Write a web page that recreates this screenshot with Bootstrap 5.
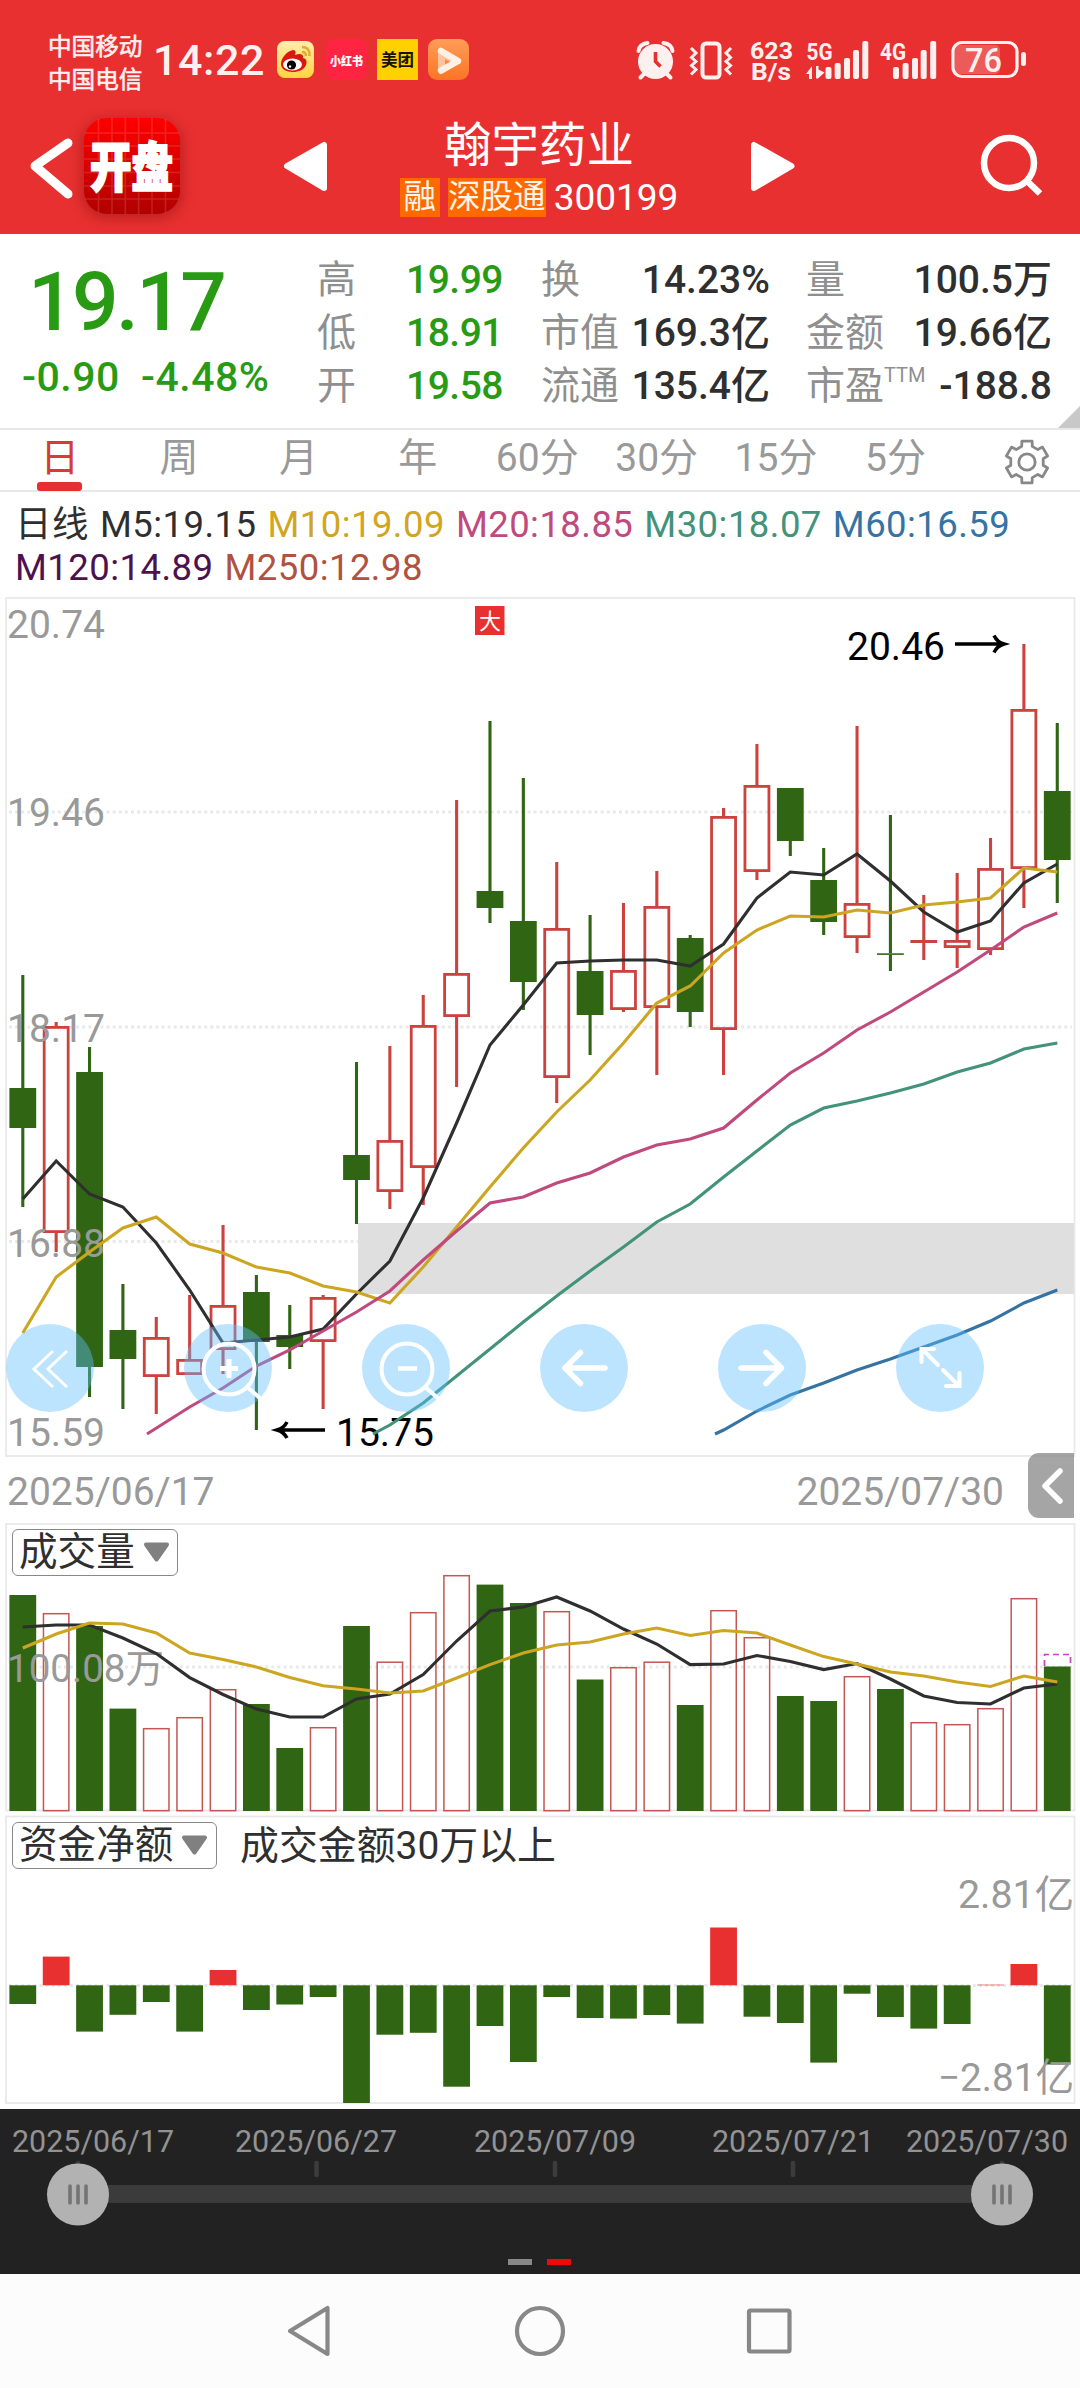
<!DOCTYPE html>
<html lang="zh-CN">
<head>
<meta charset="utf-8">
<meta name="viewport" content="width=device-width, initial-scale=1">
<title>翰宇药业 300199</title>
<link href="https://cdn.jsdelivr.net/npm/bootstrap@5.3.0/dist/css/bootstrap.min.css" rel="stylesheet">
<style>
  body{width:1080px;height:2388px;overflow:hidden;background:#fff;color:#2f2f2f;font-family:Roboto,"Noto Sans CJK SC",sans-serif;font-size:39px;line-height:1}
  svg{display:block;flex:none}
  svg text{font-family:Roboto,"Noto Sans CJK SC",sans-serif}
  .bg-brand{background:#e83030}
  .status{height:108px;color:#fff0f0}
  .carrier{width:95px;margin-left:48px;padding-top:31px;font-size:23.6px;line-height:33px;-webkit-text-stroke:.6px #fff0f0}
  .clock{width:117px;margin-left:10px;padding-top:39px;font-size:43px;font-weight:500;letter-spacing:.6px}
  .head{height:126px}
  .title{width:300px;height:106px;margin-left:49px}
  .title h1{font-size:47.5px;line-height:56px;margin:0;padding-top:10px;font-weight:400}
  .tag{background:#ff6a00;height:39px;line-height:38px;font-size:32.5px;color:#fff5e8}
  .code{font-size:37px;line-height:39px}
  .quote{height:196px;border-bottom:2px solid #e8e8e8}
  .up-down{color:#289a14}
  .price{font-size:82px;font-weight:500;letter-spacing:-2.6px;margin:32px 0 0 28px;height:91px;line-height:72px}
  .chg{font-size:41px;font-weight:500;margin-left:22px;letter-spacing:.5px}
  .stats{padding-top:21px}
  .stats>div{height:53px;line-height:50px}
  .stats span:first-child{color:#8f8f8f}
  .stats span:last-child{font-weight:500}
  .stats .up-down:last-child{letter-spacing:-.5px}
  .stats sup{font-size:20px;top:-17px;font-weight:400}
  .corner{right:0;bottom:0;border-left:22px solid transparent;border-bottom:22px solid #c8c8c8}
  .tabs{height:62px;border-bottom:2px solid #e8e8e8;color:#999}
  .tabs .tab{width:119.4px;text-align:center;line-height:56px;height:60px}
  .tabs .active{color:#d83a34;position:relative}
  .tabs .active::after{content:"";position:absolute;left:37px;top:52px;width:45px;height:9px;border-radius:3px;background:#e63030}
  .settings{margin-right:23px}
  .legend{height:104px;padding:11px 0 0 15px;font-size:36.5px;line-height:43px;letter-spacing:.45px}
  .legend span{margin-right:11px;white-space:nowrap}
  .charts{height:1512px;position:relative;margin-top:1px}
  .tool{position:absolute;top:727px;width:88px;height:88px;border-radius:50%;background:rgba(95,190,255,.42);border:0;padding:0}
  .dates{position:absolute;left:7px;right:76px;top:876px;color:#999}
  .drawer{position:absolute;left:1028px;top:856px;width:46px;height:65px;border-radius:11px 0 0 11px;background:rgba(133,133,133,.74)}
  .pick{position:absolute;left:12px;height:47px;border:1.4px solid #888;border-radius:6px;background:#fff;color:#2f2f2f;padding:0 6px;line-height:1;gap:8px;white-space:nowrap;font-size:38.6px}
  .scrub{height:165px;background:#222}
  .navkeys{height:114px;background:#fcfcfc}
</style>
</head>
<body>
<header class="bg-brand text-white">
  <div class="status d-flex align-items-start">
    <div class="carrier">中国移动<br>中国电信</div>
    <div class="clock text-nowrap">14:22</div>
    <svg width="210" height="108" viewBox="270 0 210 108">
      <defs>
        <linearGradient id="wb" x1="0" y1="0" x2="0" y2="1"><stop offset="0" stop-color="#ffeeb0"/><stop offset="1" stop-color="#ffd53e"/></linearGradient>
        <linearGradient id="og" x1="0" y1="0" x2="0" y2="1"><stop offset="0" stop-color="#ff9d58"/><stop offset="1" stop-color="#fb7425"/></linearGradient>
      </defs>
      <rect x="277" y="41" width="37" height="37" rx="8" fill="url(#wb)"/>
      <path d="M281 64c0-6 6-13 12-14 3 0 3 3 2 5 5-2 9-1 8 3 4 1 4 4 3 7-2 5-8 7-13 7-7 0-12-3-12-8z" fill="#da1710"/>
      <ellipse cx="292.500" cy="64.500" rx="9.500" ry="6" fill="#fff"/>
      <circle cx="291.500" cy="65" r="4.600" fill="#000"/><circle cx="290" cy="66.500" r="1.200" fill="#fff"/>
      <path d="M302 47c6 0 8 4 7.500 9M302 52c3 0 4 2 4 4" fill="none" stroke="#e5a92c" stroke-width="2.400"/>
      <rect x="326" y="39" width="41" height="41" rx="9" fill="#ff2442"/>
      <text x="330" y="65.500" font-size="12.500" font-weight="900" fill="#fff" textLength="33" lengthAdjust="spacingAndGlyphs">小红书</text>
      <rect x="377" y="39" width="41" height="41" fill="#ffd100"/>
      <text x="381" y="66" font-size="17" font-weight="700" fill="#1a1200" textLength="33" lengthAdjust="spacingAndGlyphs">美团</text>
      <rect x="428" y="39" width="41" height="41" rx="9" fill="url(#og)"/>
      <path d="M441 51l17 10-17 10z" fill="#ffc49d" stroke="#ffc49d" stroke-width="6" stroke-linejoin="round"/>
      <path d="M445 59v7l6-3.500z" fill="#fb8a42"/>
      <path d="M441 51l17 10-17 9.500" fill="none" stroke="#fff0e6" stroke-width="6.500" stroke-linejoin="round" stroke-linecap="round"/>
    </svg>
    <svg class="ms-auto" width="450" height="108" viewBox="630 0 450 108" fill="#fff0f0">
      <circle cx="655.500" cy="61.500" r="17.500"/>
      <path d="M638.500 51q1-7 9-8M672.500 51q-1-7-9-8M645 73l-4.500 4.500M666 73l4.500 4.500" fill="none" stroke="#fff0f0" stroke-width="4" stroke-linecap="round"/>
      <path d="M655.500 52v9.500l5 5" fill="none" stroke="#e83030" stroke-width="3.600"/>
      <rect x="702.500" y="43.500" width="17" height="34" rx="3.500" fill="none" stroke="#fff0f0" stroke-width="4"/>
      <path d="M691 48l5 5-4.500 4.500 4.500 4-4.500 4 4.500 4-5 5M731 48l-5 5 4.500 4.500-4.500 4 4.500 4-4.500 4 5 5" fill="none" stroke="#fff0f0" stroke-width="3"/>
      <g font-weight="700" font-size="24.500">
        <text x="750" y="59" textLength="43" lengthAdjust="spacingAndGlyphs">623</text>
        <text x="751" y="79.500" font-size="23" textLength="40" lengthAdjust="spacingAndGlyphs">B/s</text>
        <text x="806.500" y="59.500" textLength="26" lengthAdjust="spacingAndGlyphs">5G</text>
        <text x="880" y="59.500" textLength="26" lengthAdjust="spacingAndGlyphs">4G</text>
      </g>
      <path d="M806 74l6-8v13h-3v-5zM816 66h2.500v3.500l6 3-6.500 6h-2z"/>
      <g>
        <rect x="825.500" y="67" width="6" height="12" rx="2"/><rect x="834.700" y="63" width="6" height="16" rx="2"/><rect x="844" y="58" width="6" height="21" rx="2"/><rect x="853" y="50" width="6" height="29" rx="2"/><rect x="862.300" y="41" width="6" height="38" rx="2"/>
        <rect x="893" y="67" width="6" height="12" rx="2"/><rect x="902.600" y="63" width="6" height="16" rx="2"/><rect x="912" y="58" width="6" height="21" rx="2"/><rect x="920.700" y="50" width="6" height="29" rx="2"/><rect x="930.200" y="41" width="6" height="38" rx="2"/>
      </g>
      <rect x="955" y="45" width="45" height="29" rx="5" opacity=".22"/>
      <rect x="953" y="42.500" width="64" height="34" rx="9" fill="none" stroke="#fff0f0" stroke-width="3.200"/>
      <rect x="1021" y="52" width="5" height="14" rx="2.500"/>
      <text x="965" y="71.500" font-size="33.500" font-weight="500" textLength="37" lengthAdjust="spacingAndGlyphs">76</text>
    </svg>
  </div>
  <div class="head d-flex align-items-start">
    <svg width="340" height="126" viewBox="0 108 340 126">
      <defs>
        <linearGradient id="kp" x1="0" y1="0" x2="0" y2="1"><stop offset="0" stop-color="#ff0000"/><stop offset="1" stop-color="#b10000"/></linearGradient>
        <filter id="sh" x="-30%" y="-30%" width="160%" height="160%"><feGaussianBlur stdDeviation="7"/></filter>
      </defs>
      <path d="M68 143L35 166l33 28" fill="none" stroke="#fff" stroke-width="9" stroke-linecap="round" stroke-linejoin="round"/>
      <rect x="82" y="120" width="100" height="98" rx="24" fill="#600" opacity=".35" filter="url(#sh)"/>
      <rect x="84" y="118" width="96" height="96" rx="23" fill="url(#kp)"/>
      <path d="M98.500 119v94M112 118v96M125.300 118v96M138.600 118v96M152 118v96M165.500 119v94M85 133h94M84 146h96M84 159h96M84 172.500h96M84 186h96M85 199h94" stroke="#fff" stroke-opacity=".13" stroke-width="1.600"/>
      <text transform="translate(90 187) scale(1 1.280)" font-size="42" font-weight="900" fill="#fff" stroke="#fff" stroke-width="1.600" textLength="83" lengthAdjust="spacingAndGlyphs">开盘</text>
      <path d="M287 166L324 145v43z" fill="#fff" stroke="#fff" stroke-width="6" stroke-linejoin="round"/>
    </svg>
    <div class="title text-center">
      <h1>翰宇药业</h1>
      <div class="d-flex justify-content-center gap-2 mt-1">
        <span class="tag px-1">融</span><span class="tag px-0">深股通</span><span class="code">300199</span>
      </div>
    </div>
    <svg class="ms-auto" width="340" height="126" viewBox="740 108 340 126">
      <path d="M791.500 166L754 145v43z" fill="#fff" stroke="#fff" stroke-width="6" stroke-linejoin="round"/>
      <g fill="none" stroke="#fff" stroke-width="6.500"><circle cx="1009" cy="163" r="25"/><path d="M1027 181l13 12.500"/></g>
    </svg>
  </div>
</header>

<section class="quote position-relative d-flex">
  <div class="up-down" style="width:317px">
    <div class="price">19.17</div>
    <div class="chg d-flex text-nowrap"><span style="width:119px">-0.90</span><span>-4.48%</span></div>
  </div>
  <div class="stats" style="width:186px">
    <div class="d-flex justify-content-between"><span>高</span><span class="up-down">19.99</span></div>
    <div class="d-flex justify-content-between"><span>低</span><span class="up-down">18.91</span></div>
    <div class="d-flex justify-content-between"><span>开</span><span class="up-down">19.58</span></div>
  </div>
  <div class="stats" style="width:229px;margin-left:38px">
    <div class="d-flex justify-content-between"><span>换</span><span>14.23%</span></div>
    <div class="d-flex justify-content-between"><span>市值</span><span>169.3亿</span></div>
    <div class="d-flex justify-content-between"><span>流通</span><span>135.4亿</span></div>
  </div>
  <div class="stats" style="width:246px;margin-left:36px">
    <div class="d-flex justify-content-between"><span>量</span><span>100.5万</span></div>
    <div class="d-flex justify-content-between"><span>金额</span><span>19.66亿</span></div>
    <div class="d-flex justify-content-between"><span>市盈<sup>TTM</sup></span><span>-188.8</span></div>
  </div>
  <i class="corner position-absolute"></i>
</section>

<nav class="tabs d-flex">
  <span class="tab active">日</span><span class="tab">周</span><span class="tab">月</span><span class="tab">年</span><span class="tab">60分</span><span class="tab">30分</span><span class="tab">15分</span><span class="tab">5分</span>
  <svg class="settings ms-auto mt-1" width="60" height="56" viewBox="-30 -28 60 56" fill="none" stroke="#888" stroke-width="2.800" stroke-linejoin="round"><path id="gear"/><circle r="8.200"/></svg>
</nav>

<section class="legend">
  <div class="d-flex"><span>日线</span><span>M5:19.15</span><span style="color:#d2a520">M10:19.09</span><span style="color:#c04a7e">M20:18.85</span><span style="color:#43927a">M30:18.07</span><span style="color:#3573a4">M60:16.59</span></div>
  <div class="d-flex"><span style="color:#4b124f">M120:14.89</span><span style="color:#b0523f">M250:12.98</span></div>
</section>

<main class="charts">
  <svg id="plot" width="1080" height="1512" viewBox="0 597 1080 1512"></svg>
  <div class="dates d-flex justify-content-between"><span>2025/06/17</span><span>2025/07/30</span></div>
  <button class="tool" style="left:6px"><svg width="88" height="88" viewBox="0 0 88 88" fill="none" stroke="#fff" stroke-width="3"><path d="M47 27L28 45l19 18M61 27L42 45l19 18"/></svg></button>
  <button class="tool" style="left:184px"><svg width="88" height="88" viewBox="0 0 88 88" fill="none" stroke="#fff" stroke-width="4"><circle cx="45" cy="45" r="25.500"/><path d="M63 63l14 12"/><path d="M45 35v19M36 44.500h18" stroke-width="5"/></svg></button>
  <button class="tool" style="left:362px"><svg width="88" height="88" viewBox="0 0 88 88" fill="none" stroke="#fff" stroke-width="4"><circle cx="45" cy="45" r="25.500"/><path d="M63 63l14 12"/><path d="M36 44.500h19" stroke-width="4.500"/></svg></button>
  <button class="tool" style="left:540px"><svg width="88" height="88" viewBox="0 0 88 88" fill="none" stroke="#fff" stroke-width="5.500" stroke-linecap="round" stroke-linejoin="round"><path d="M65 44H25M40.500 28.500L25 44l15.500 15.500"/></svg></button>
  <button class="tool" style="left:718px"><svg width="88" height="88" viewBox="0 0 88 88" fill="none" stroke="#fff" stroke-width="5.500" stroke-linecap="round" stroke-linejoin="round"><path d="M23 44h40M48 28.500L63.500 44 48 59.500"/></svg></button>
  <button class="tool" style="left:896px"><svg width="88" height="88" viewBox="0 0 88 88" fill="none" stroke="#fff" stroke-width="4" stroke-linecap="round"><path d="M42 41L26 25m-.500 13V25H38M47 46l16 16m.500-13v13H50"/></svg></button>
  <div class="drawer"><svg width="46" height="65" viewBox="0 0 46 65" fill="none" stroke="#fff" stroke-width="5.500" stroke-linecap="round" stroke-linejoin="round"><path d="M32 18L17 33l15 15"/></svg></div>
  <button class="pick d-flex align-items-center" style="top:932px;width:166px"><span>成交量</span><svg width="27" height="21" viewBox="0 0 27 21"><path d="M3 2.500h21L13.500 17.500z" fill="#808080" stroke="#808080" stroke-width="4" stroke-linejoin="round"/></svg></button>
  <button class="pick d-flex align-items-center" style="top:1225px;width:205px"><span>资金净额</span><svg width="27" height="21" viewBox="0 0 27 21"><path d="M3 2.500h21L13.500 17.500z" fill="#808080" stroke="#808080" stroke-width="4" stroke-linejoin="round"/></svg></button>
</main>

<section class="scrub">
  <svg width="1080" height="165" viewBox="0 2109 1080 165">
    <g font-size="32" fill="#939393">
      <text x="12" y="2152" textLength="162" lengthAdjust="spacingAndGlyphs">2025/06/17</text>
      <text x="235" y="2152" textLength="162" lengthAdjust="spacingAndGlyphs">2025/06/27</text>
      <text x="474" y="2152" textLength="162" lengthAdjust="spacingAndGlyphs">2025/07/09</text>
      <text x="712" y="2152" textLength="162" lengthAdjust="spacingAndGlyphs">2025/07/21</text>
      <text x="906" y="2152" textLength="162" lengthAdjust="spacingAndGlyphs">2025/07/30</text>
    </g>
    <path d="M78 2163v12M316.500 2163v12M555 2163v12M793 2163v12M1002 2163v12" stroke="#3c3c3c" stroke-width="4.500" stroke-linecap="round"/>
    <rect x="78" y="2185" width="924" height="18" fill="#3b3b3b"/>
    <circle cx="78" cy="2194.500" r="31" fill="#b2b2b2"/><circle cx="1002" cy="2194.500" r="31" fill="#b2b2b2"/>
    <path d="M70 2186v17M78 2186v17M86 2186v17M994 2186v17M1002 2186v17M1010 2186v17" stroke="#747474" stroke-width="3.600" stroke-linecap="round"/>
    <rect x="508" y="2259" width="24" height="6" fill="#888"/><rect x="547" y="2259" width="24" height="6" fill="#f00a00"/>
  </svg>
</section>
<footer class="navkeys">
  <svg width="1080" height="114" viewBox="0 2274 1080 114" fill="none" stroke="#888" stroke-width="4.200" stroke-linejoin="round">
    <path d="M290 2331l37.500-23v46z"/><circle cx="540" cy="2331" r="23"/><rect x="749" y="2310.500" width="40.500" height="41" rx="1.500"/>
  </svg>
</footer>

<script src="https://cdn.jsdelivr.net/npm/bootstrap@5.3.0/dist/js/bootstrap.bundle.min.js"></script>
<script>
const GREEN='#306613', RED='#cc423f', SOLID='#e83030';
const cx=i=>22.8+33.37*i;
let out='';
const rect=(x,y,w,h,a)=>out+=`<rect x="${x}" y="${y}" width="${w}" height="${h}" ${a}/>`;
const seg=(x1,y1,x2,y2,a)=>out+=`<path d="M${x1} ${y1}L${x2} ${y2}" ${a}/>`;
const label=(x,y,w,s,c)=>out+=`<text x="${x}" y="${y}" font-size="39" fill="${c||'#999'}" textLength="${w}" lengthAdjust="spacingAndGlyphs">${s}</text>`;
const series=(start,vals,color,head)=>out+=`<polyline points="${(head?head+' ':'')+vals.map((v,k)=>cx(start+k).toFixed(1)+','+v).join(' ')}" fill="none" stroke="${color}" stroke-width="3.1"/>`;
const dots=y=>seg(9,y,1072,y,'stroke="#e9e9e9" stroke-width="3" stroke-dasharray="3 3.1"');

// frames, grid and gap zone
const frame='fill="none" stroke="#e9e9e9" stroke-width="1.8"';
rect(6,598,1068.500,858,frame); rect(6,1524,1068.500,286.500,frame); rect(6,1816.500,1068.500,286.500,frame);
[812,1027,1241.500,1667,1985.500].forEach(dots);
rect(358,1223,716,71,'fill="#dfdfdf"');

// candles: side, high, body top, body bottom, low
const k=[['g',975,1088,1128,1207],['r',1022,1026,1233,1252],['g',1047,1072,1367,1397],['g',1284,1330,1359,1409],['r',1317,1337,1377,1414],['r',1295,1359,1375,1375],['r',1225,1305,1350,1374],['g',1275,1292,1342,1430],['g',1305,1335,1347,1369],['r',1295,1297,1342,1409],['g',1062,1155,1180,1224],['r',1046,1140,1192,1209],['r',995,1025,1168,1205],['r',800,973,1017,1087],['g',721,891,908,923],['g',778,921,982,1010],['r',862,928,1078,1103],['g',915,971,1015,1055],['r',903,970,1010,1012],['r',871,906,1008,1075],['g',935,938,1012,1027],['r',808,816,1030,1075],['r',744,785,872,880],['g',788,788,841,856],['g',848,880,922,935],['r',726,903,938,953],['g',815,953.300,954.900,971],['r',895,940,943,960],['r',873,940,948,968],['r',838,868,950,955],['r',644,709,869,908],['g',723,791,860,903]];
k.forEach(([s,h,t,b,l],i)=>{
  const c=s==='g'?GREEN:RED, a=`stroke="${c}" stroke-width="3.1"`, x=cx(i);
  seg(x,h,x,t,a); seg(x,b,x,l,a);
  if(s==='g'||b-t<4) rect(x-13.400,t,26.800,b-t,`fill="${c}"`);
  else rect(x-12,t+1.400,24,b-t-2.800,`fill="none" stroke="${c}" stroke-width="2.800"`);
});
[['20.74',7,637.500],['19.46',7,826],['18.17',7,1041.500],['16.88',7,1256.500],['15.59',7,1445.500]].forEach(([s,x,y])=>label(x,y,98,s));
label(336,1445.500,98,'15.75','#000'); label(847,659.500,98,'20.46','#000');
out+='<path d="M277 1430h48M287 1422q-3 6-10 8q7 2 10 8" fill="none" stroke="#000" stroke-width="3.500"/><path d="M955 644h48M994 635.500q3 6.500 10 8.500q-7 2-10 8.500" fill="none" stroke="#000" stroke-width="3.500"/>';
rect(475,606,29.500,29,`fill="${SOLID}"`);
out+='<text x="479" y="628.500" font-size="22" fill="#fff">大</text>';

// moving averages
series(0,[1199,1161,1194,1207,1243,1290,1343,1340,1337,1329,1294,1261,1198,1123,1045,1005,963,961,960,960,966,944,898,872,875,854,881,912,932,921,883,864],'#2f2f2f');
series(0,[1333,1277,1252,1228,1217,1244,1253,1267,1273,1286,1292,1303,1267,1227,1187,1148,1112,1080,1043,1003,986,953,930,916,917,910,913,905,902,898,868,872],'#cda621');
series(5,[1407,1388,1366,1350,1331,1312,1291,1260,1231,1203,1197,1183,1173,1157,1145,1139,1128,1100,1073,1053,1030,1012,992,972,950,927,913],'#c04a7e','147,1434');
series(11,[1425,1403,1376,1349,1322,1296,1271,1247,1222,1204,1177,1151,1125,1108,1101,1093,1084,1072,1063,1049,1043],'#43927a','373,1434');
series(21,[1430,1411,1395,1383,1370,1359,1347,1335,1321,1303,1290],'#3573a4','715,1434');

// volume
const v=[1595,1613,1626,1708.600,1728,1717,1689,1704,1748,1727,1626,1661.500,1612,1575,1584.600,1603,1611,1679.500,1667,1661.500,1705,1610,1637,1696,1701,1676,1689,1722,1724,1708,1598,1666.500];
v.forEach((t,i)=>{
  const x=cx(i);
  if(k[i][0]==='g') rect(x-13.400,t,26.800,1811-t,`fill="${GREEN}"`);
  else rect(x-12.700,t+.700,25.400,1810-t,'fill="none" stroke="#c45753" stroke-width="1.500"');
});
out+='<path d="M1044.500 1666v-11.500h26v11.500" fill="none" stroke="#c83fc8" stroke-width="1.700" stroke-dasharray="6 4"/>';
label(7,1682,157,'100.08万');
series(0,[1627,1625,1625,1638,1653.500,1677.600,1694.500,1709,1717,1717,1699,1694,1674.500,1641,1611,1607,1597,1611,1629,1644,1664.600,1664,1655.500,1661.500,1669.600,1663.500,1679,1696,1702.500,1704,1688,1684],'#2f2f2f');
series(0,[1648,1634,1623,1624,1633,1653,1659.600,1667,1677.600,1685.700,1689,1693,1691,1678,1664.600,1653,1645,1642,1634,1628,1635.500,1630.500,1633,1645,1656.600,1664,1672,1676,1682,1686.500,1676,1682],'#cda621');

// net capital flow around its zero line
const z=1985.300;
[2004,1956.600,2031.600,2014.800,2002,2031.600,1970,2010,2004.500,1997,2103,2034.700,2032.800,2086.700,2026,2062,1997,2018,2018.600,2015,2023.600,1927.500,2016.700,2023,2062.600,1993.700,2017,2028.600,2024,1984.700,1964,2064.500].forEach((e,i)=>
  rect(cx(i)-13.400,Math.min(z,e),26.800,Math.abs(e-z),`fill="${e<z?SOLID:GREEN}"`));
label(240,1858.500,316,'成交金额30万以上','#2f2f2f');
label(958,1908,116,'2.81亿'); label(938,2091,136,'−2.81亿');
document.getElementById('plot').innerHTML=out;

// settings gear outline, six teeth
const n=6; let d='';
for(let i=0;i<n;i++) [[-.330,16.500],[-.240,21.500],[.240,21.500],[.330,16.500]].forEach(([o,r])=>{
  const a=i*2*Math.PI/n-Math.PI/2+o; d+=(d?'L':'M')+(r*Math.cos(a)).toFixed(1)+' '+(r*Math.sin(a)).toFixed(1);
});
document.getElementById('gear').setAttribute('d',d+'z');
</script>
</body>
</html>
